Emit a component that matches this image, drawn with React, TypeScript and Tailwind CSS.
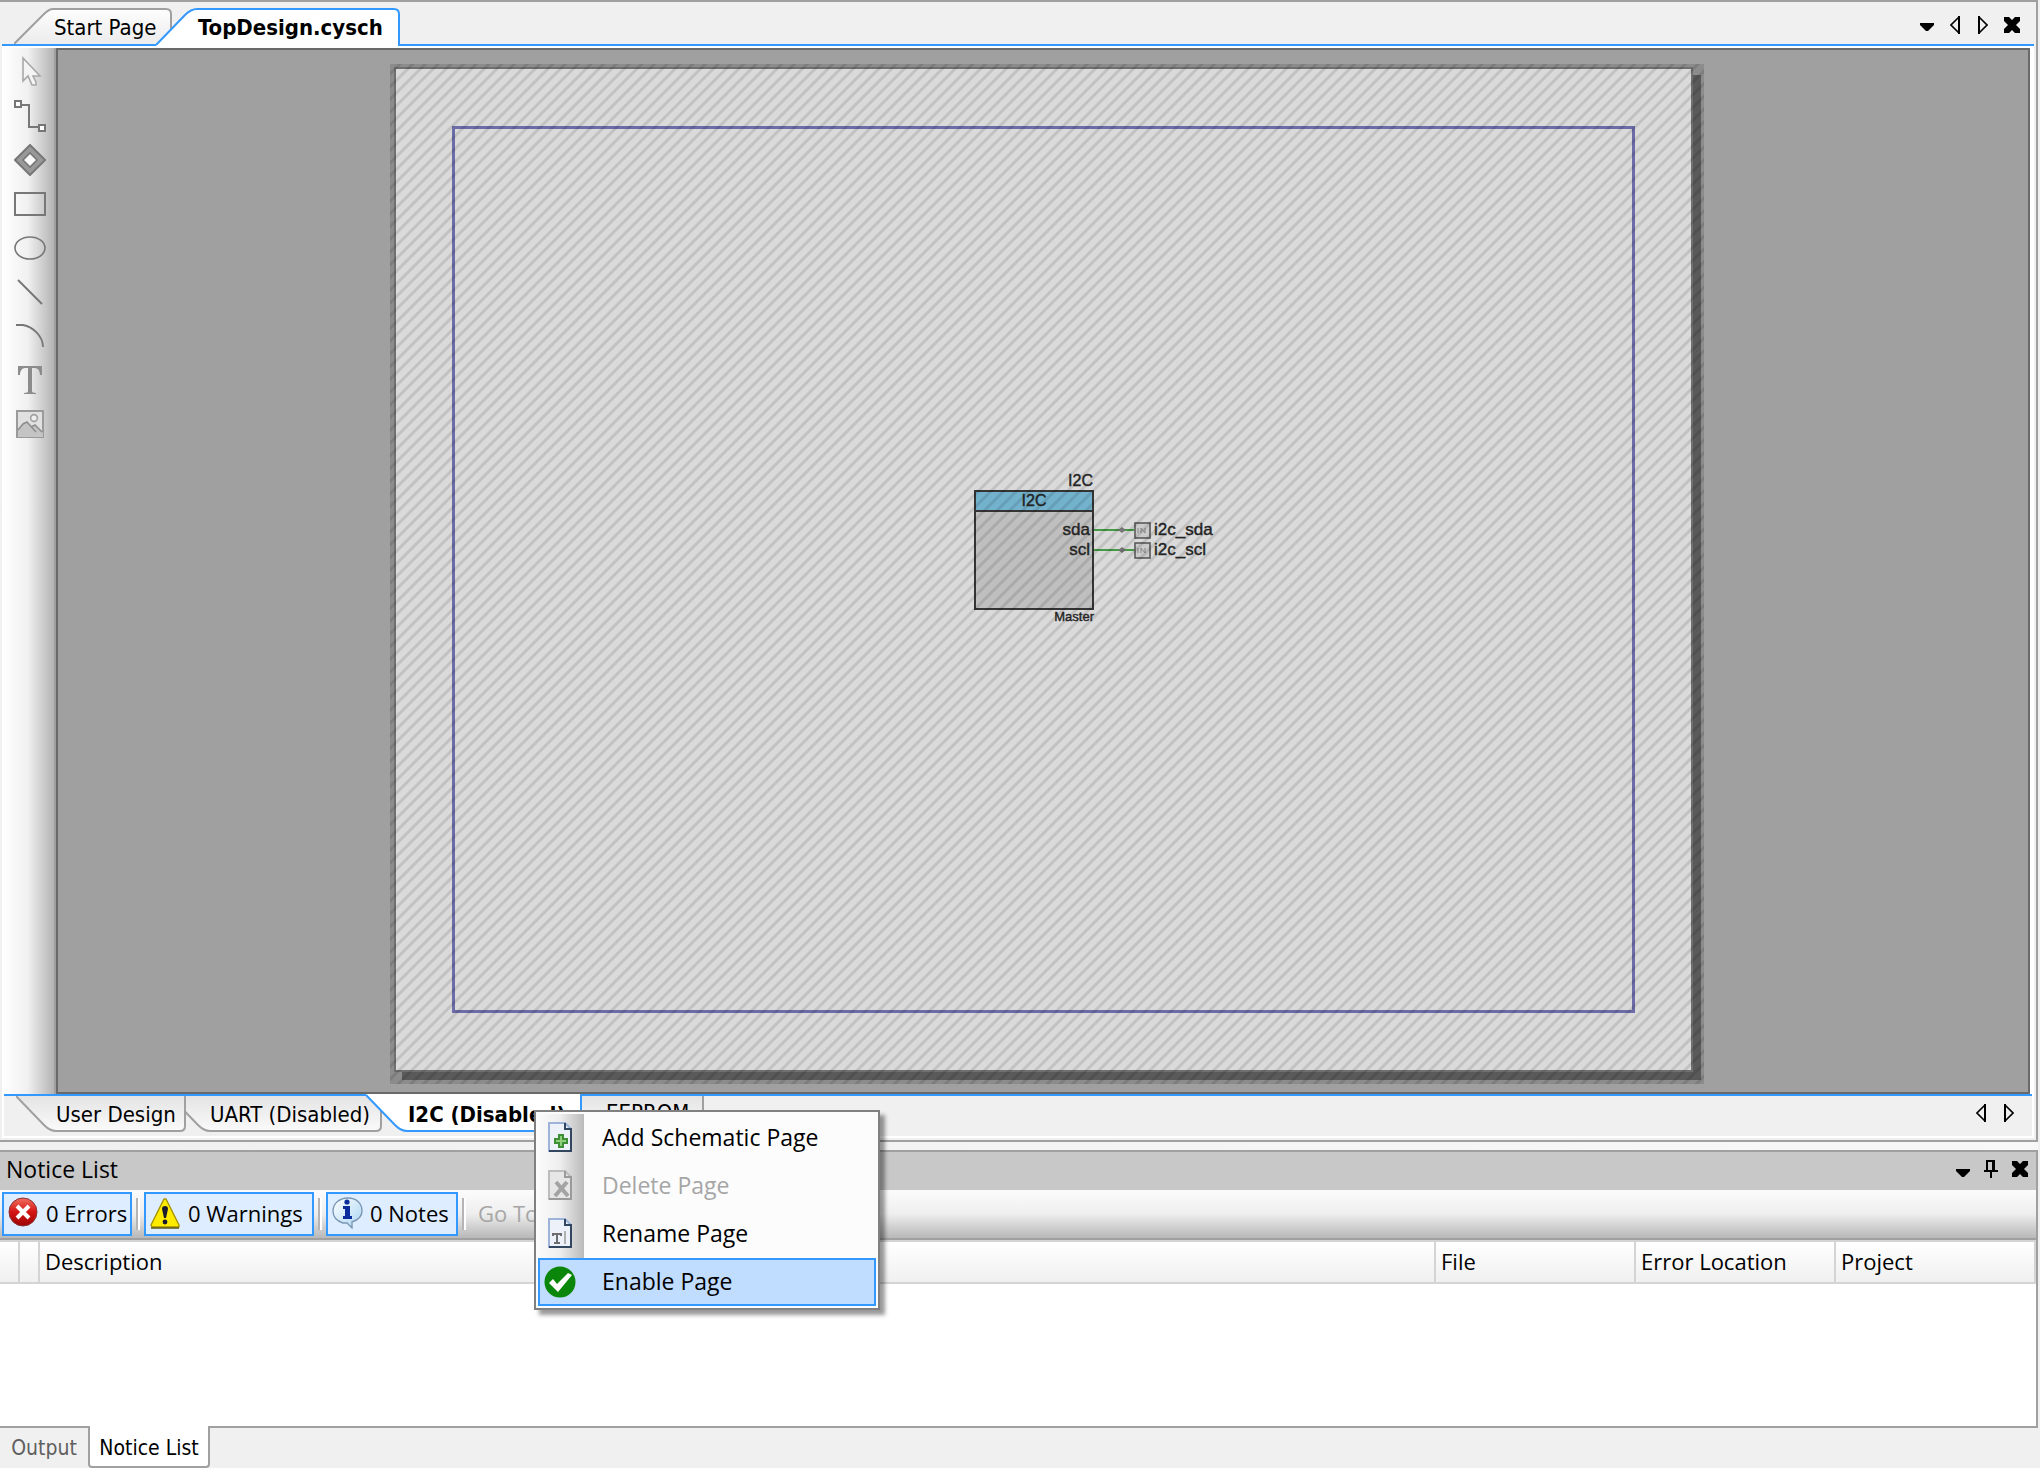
import React, { useState } from 'react';

const tools = ['Select', 'Wire', 'Sheet Connector', 'Rectangle', 'Ellipse', 'Line', 'Arc', 'Text', 'Image'];

const ToolIcon: React.FC<{ name: string }> = ({ name }) => (
  <svg width="32" height="32" viewBox="0 0 32 32" fill="none" stroke="#777" strokeWidth="2">
    {name === 'Select' && (
      <path d="M9 2v23l5-5 4 9h4v-3l-3-6h7z" fill="#f4f4f4" stroke="#a8a8a8" strokeWidth="1.6" />
    )}
    {name === 'Wire' && (
      <>
        <path d="M8 5h7v22h9" />
        <path d="M1 1h6v6H1zM25 25h6v6h-6z" fill="#fff" />
      </>
    )}
    {name === 'Sheet Connector' && (
      <>
        <path d="M16 1l15 15-15 15L1 16z" fill="#999" />
        <path d="M16 9l7 7-7 7-7-7z" fill="#fafafa" strokeWidth="1.6" />
      </>
    )}
    {name === 'Rectangle' && <path d="M1 5h30v22H1z" />}
    {name === 'Ellipse' && <ellipse cx="16" cy="16" rx="15" ry="11" strokeWidth="1.6" />}
    {name === 'Line' && <path d="M4 4l24 24" />}
    {name === 'Arc' && <path d="M2 5h7c10 2 20 11 20 22" strokeWidth="1.8" />}
    {name === 'Text' && (
      <path
        d="M4 2h24v9h-2c0-4-2-7-5-7h-3v23c0 1 1 2 4 2v1H10v-1c3 0 4-1 4-2V4h-3c-3 0-5 3-5 7H4z"
        fill="#8c8c8c"
        stroke="none"
      />
    )}
    {name === 'Image' && (
      <>
        <path d="M3 3h26v26H3z" fill="#e0e0e0" stroke="#9a9a9a" />
        <circle cx="20" cy="10" r="3.4" stroke="#a0a0a0" fill="#eee" strokeWidth="1.6" />
        <path d="M4 22l5-6 4-2 5 5 3-2 8 8v4H4z" fill="#c4c4c4" stroke="none" />
        <path d="M4 22l5-6 4-2 9 10M17 19l4-2 7 7" stroke="#8e8e8e" strokeWidth="1.6" />
      </>
    )}
  </svg>
);

const Caret: React.FC = () => (
  <svg width="14" height="8" viewBox="0 0 14 8">
    <path d="M0 0h14v2L8 8H6L0 2z" />
  </svg>
);

const LeftArrow: React.FC = () => (
  <svg width="10" height="18" viewBox="0 0 10 18" fill="none" stroke="#000" strokeWidth="2">
    <path d="M9 0v18" />
    <path d="M9 1L1 9l8 8" strokeWidth="1.6" />
  </svg>
);

const RightArrow: React.FC = () => (
  <svg width="10" height="18" viewBox="0 0 10 18" fill="none" stroke="#000" strokeWidth="2">
    <path d="M1 0v18" />
    <path d="M1 1l8 8-8 8" strokeWidth="1.6" />
  </svg>
);

const Cross: React.FC = () => (
  <svg width="16" height="16" viewBox="0 0 16 16">
    <path d="M0 0h5l3 3 3-3h5v4l-4 4 4 4v4h-5l-3-3-3 3H0v-4l4-4-4-4z" />
  </svg>
);

const Pin: React.FC = () => (
  <svg width="14" height="18" viewBox="0 0 14 18" fill="none" stroke="#000" strokeWidth="2">
    <path d="M3 11V1h7v10M0 11h14M7 11v7" />
    <path d="M9 1v10" />
  </svg>
);

const ErrorIcon: React.FC = () => (
  <svg width="32" height="32" viewBox="0 0 32 32">
    <defs>
      <linearGradient id="err" x1="0" y1="0" x2="0" y2="1">
        <stop offset="0" stopColor="#f07060" />
        <stop offset="0.5" stopColor="#d51414" />
        <stop offset="1" stopColor="#9c0505" />
      </linearGradient>
    </defs>
    <circle cx="15" cy="15" r="14" fill="url(#err)" stroke="#8d3030" />
    <path d="M9 9l12 12M21 9L9 21" stroke="#fff" strokeWidth="4" />
  </svg>
);

const WarningIcon: React.FC = () => (
  <svg width="32" height="32" viewBox="0 0 32 32">
    <path d="M14 2L1 28l1 2h27l0-2L16 2z" fill="#ffeb00" stroke="#a59300" strokeWidth="1.4" strokeLinejoin="round" />
    <path d="M1 31h28" stroke="#55500a" strokeWidth="1.4" />
    <path d="M15 9c2 0 3 1 3 3l-2 9h-2l-2-9c0-2 1-3 3-3z" fill="#1a1a30" />
    <circle cx="15" cy="25" r="2.4" fill="#1a1a30" />
  </svg>
);

const NoteIcon: React.FC = () => (
  <svg width="32" height="32" viewBox="0 0 32 32">
    <defs>
      <linearGradient id="note" x1="0" y1="0" x2="1" y2="1">
        <stop offset="0" stopColor="#fff" />
        <stop offset="1" stopColor="#a8d4f2" />
      </linearGradient>
    </defs>
    <path
      d="M16 1C8 1 1 6 1 14c0 6 4 10 10 12l4 0 5 5v-6c6-2 10-6 10-11C30 6 24 1 16 1z"
      fill="url(#note)"
      stroke="#7d98b5"
      strokeWidth="1.4"
    />
    <circle cx="15" cy="5" r="2.6" fill="#0a2c9c" />
    <path d="M11 9h7v10h2v3h-9v-3h2v-7h-2z" fill="#0a2c9c" />
  </svg>
);

const PageIcon: React.FC<{ kind: 'add' | 'delete' | 'rename' }> = ({ kind }) => {
  const off = kind === 'delete';
  return (
    <svg width="24" height="30" viewBox="0 0 24 30" fill="none">
      <path d="M1 1h16l6 6v22H1z" fill={off ? '#e6e6e6' : '#edf1f9'} stroke={off ? '#bcbcbc' : '#9db4d8'} strokeWidth="2" />
      <path d="M17 1v6h6v22H1" stroke={off ? '#9a9a9a' : '#33465f'} strokeWidth="2" />
      {kind === 'add' && (
        <path d="M11 13h4v4h4v4h-4v4h-4v-4H7v-4h4z" fill="#8fd07c" stroke="#3e8f35" strokeWidth="2" />
      )}
      {kind === 'delete' && <path d="M8 12l12 14M19 12L7 26" stroke="#a3a3a3" strokeWidth="4" />}
      {kind === 'rename' && (
        <>
          <path d="M4 16h10M9 16v10M6 25h6M5 15v3M13 15v3" stroke="#6e6e6e" strokeWidth="2" />
          <path d="M17 13v13" stroke="#b0b0b0" strokeWidth="2" />
        </>
      )}
    </svg>
  );
};

const EnableIcon: React.FC = () => (
  <svg width="32" height="32" viewBox="0 0 32 32">
    <circle cx="16" cy="16" r="15.5" fill="#0a860a" />
    <path d="M5 17l4-4 4 5L24 7l4 2-14 17z" fill="#fff" />
  </svg>
);

const pins = [
  { name: 'sda', y: 530 },
  { name: 'scl', y: 550 },
];

// component symbol with its two pins
const I2CBlock: React.FC = () => (
  <svg
    width="360"
    height="200"
    viewBox="864 470 360 200"
    className="font-['Liberation_Sans',sans-serif]"
    fill="#2a2a2a"
    stroke="#2a2a2a"
    strokeWidth="0"
  >
    <rect x="975" y="491" width="118" height="118" fill="#dadada" />
    <rect x="975" y="491" width="118" height="20" fill="#82cbea" />
    <path d="M975 491h118v118H975zM975 511h118" fill="none" stroke="#3c3c3c" strokeWidth="2" />
    <g strokeWidth="0.4">
      <text x="1093" y="486" fontSize="16" textAnchor="end">I2C</text>
      <text x="1034" y="506" fontSize="16" textAnchor="middle">I2C</text>
      <text x="1094" y="621" fontSize="13" textAnchor="end">Master</text>
    </g>
    {pins.map((pin) => (
      <g key={pin.name}>
        <path d={`M1094 ${pin.y}h40`} stroke="#4fb04f" strokeWidth="2" />
        <path d={`M1118 ${pin.y}l4-3 4 3-4 3z`} fill="#888" />
        <rect x="1135" y={pin.y - 7} width="15" height="15" fill="#e8e8e8" stroke="#666" strokeWidth="1.6" />
        <path d={`M1138 ${pin.y - 2}v5M1141 ${pin.y + 3}v-5l4 5v-5`} fill="none" stroke="#999" strokeWidth="1" />
        <g fontSize="17" strokeWidth="0.4">
          <text x="1090" y={pin.y + 5} textAnchor="end">{pin.name}</text>
          <text x="1154" y={pin.y + 5}>{`i2c_${pin.name}`}</text>
        </g>
      </g>
    ))}
  </svg>
);

const menuItems = [
  { label: 'Add Schematic Page', icon: <PageIcon kind="add" /> },
  { label: 'Delete Page', icon: <PageIcon kind="delete" />, disabled: true },
  { label: 'Rename Page', icon: <PageIcon kind="rename" /> },
  { label: 'Enable Page', icon: <EnableIcon />, active: true },
];

const PageMenu: React.FC = () => (
  <div
    role="menu"
    className="absolute left-[530px] top-[14px] z-30 w-[346px] border-2 border-[#808080] bg-[#fcfcfc] py-[2px] font-['Open_Sans',sans-serif] text-[23px] shadow-[5px_5px_4px_rgba(0,0,0,0.4)]"
  >
    {menuItems.map((item) =>
      item.active ? (
        <button
          key={item.label}
          role="menuitem"
          className="mx-[2px] flex h-12 w-[338px] items-center border-2 border-[#3399ff] bg-[#c0ddff]"
        >
          <span className="flex w-11 shrink-0 pl-1">{item.icon}</span>
          <span className="pb-[2px] pl-[18px]">{item.label}</span>
        </button>
      ) : (
        <button
          key={item.label}
          role="menuitem"
          disabled={item.disabled}
          className="flex h-12 w-full items-center disabled:text-[#a6a6a6]"
        >
          <span className="flex h-full w-12 shrink-0 items-center justify-center bg-linear-to-r from-[#fcfcfc] via-[#eeeeee] to-[#bababa] pb-[2px]">
            {item.icon}
          </span>
          <span className="pb-[2px] pl-[18px]">{item.label}</span>
        </button>
      )
    )}
  </div>
);

const TabFill: React.FC = () => (
  <svg width="0" height="0" className="absolute">
    <defs>
      <linearGradient id="tab-top" x1="0" y1="0" x2="0" y2="1">
        <stop offset="0" stopColor="#fdfdfd" />
        <stop offset="1" stopColor="#ececec" />
      </linearGradient>
      <linearGradient id="tab-bottom" x1="0" y1="0" x2="0" y2="1">
        <stop offset="0" stopColor="#e4e4e4" />
        <stop offset="1" stopColor="#fafafa" />
      </linearGradient>
    </defs>
  </svg>
);

const DocumentTabs: React.FC = () => (
  <div className="relative z-10 flex h-[42px] items-end justify-between">
    <div className="-mb-[2px] flex pl-3">
      <button className="relative flex h-[38px] w-[158px] items-center pl-10 pt-[2px]">
        <svg className="absolute left-0 top-0" width="158" height="38" viewBox="0 0 158 38">
          <path d="M0 36L30 6q5-5 9-5h113q5 0 5 5v30" fill="url(#tab-top)" stroke="#a0a0a0" strokeWidth="2" />
          <path d="M0 37h158" stroke="#3399ff" strokeWidth="2" />
        </svg>
        <span className="relative">Start Page</span>
      </button>
      <button className="relative -ml-4 flex h-[38px] w-[244px] items-center pl-[42px] pt-[2px] font-bold">
        <svg className="absolute left-0 top-0" width="246" height="38" viewBox="0 0 246 38">
          <path d="M0 37L29 7q6-6 12-6h197q5 0 5 5v31h2v1H0z" fill="#fff" />
          <path d="M0 37L29 7q6-6 12-6h197q5 0 5 5v31h2" fill="none" stroke="#3399ff" strokeWidth="2" />
        </svg>
        <span className="relative">TopDesign.cysch</span>
      </button>
    </div>
    <div className="mb-[10px] mr-[14px] flex items-center">
      <button aria-label="Open documents" className="mr-4 mt-1"><Caret /></button>
      <button aria-label="Scroll left" className="mr-[18px]"><LeftArrow /></button>
      <button aria-label="Scroll right" className="mr-4"><RightArrow /></button>
      <button aria-label="Close document"><Cross /></button>
    </div>
  </div>
);

const SheetTabs: React.FC = () => (
  <div className="relative z-20 flex h-[42px] items-start justify-between border-t-2 border-[#3399ff] bg-[#f0f0f0]">
    <div className="flex pl-3">
      <button className="relative z-10 flex h-9 w-[170px] items-center pl-10 pt-[2px]">
        <svg className="absolute left-0 top-0" width="170" height="36" viewBox="0 0 170 36">
          <path d="M0 0l28 29q6 6 12 6h124q5 0 5-5V0" fill="url(#tab-bottom)" stroke="#a0a0a0" strokeWidth="2" />
        </svg>
        <span className="relative">User Design</span>
      </button>
      <button className="relative -ml-4 flex h-9 w-[212px] items-center pl-10 pt-[2px]">
        <svg className="absolute left-0 top-0" width="212" height="36" viewBox="0 0 212 36">
          <path d="M0 0l28 29q6 6 12 6h166q5 0 5-5V0" fill="url(#tab-bottom)" stroke="#a0a0a0" strokeWidth="2" />
        </svg>
        <span className="relative">UART (Disabled)</span>
      </button>
      <button className="relative z-10 -ml-4 -mt-[2px] flex h-[38px] w-[216px] items-center pl-[42px] pt-1 font-bold">
        <svg className="absolute left-0 top-0" width="216" height="38" viewBox="0 0 216 38">
          <path d="M0 1l29 30q6 6 12 6h169q5 0 5-5V0H0z" fill="#fff" />
          <path d="M0 1l29 30q6 6 12 6h169q5 0 5-5V0" fill="none" stroke="#3399ff" strokeWidth="2" />
        </svg>
        <span className="relative">I2C (Disabled)</span>
      </button>
      <button className="flex h-9 w-[122px] items-center border-b-2 border-r-2 border-[#a0a0a0] bg-linear-to-b from-[#e4e4e4] to-[#fafafa] pl-6">
        EEPROM
      </button>
    </div>
    <div className="mr-[18px] mt-2 flex gap-[18px]">
      <button aria-label="Previous pages"><LeftArrow /></button>
      <button aria-label="Next pages"><RightArrow /></button>
    </div>
    <PageMenu />
  </div>
);

const Canvas: React.FC = () => (
  <div className="flex flex-1 border-2 border-[#696969] bg-[#a0a0a0] pb-2 pl-[332px] pr-[324px] pt-[14px]">
    <div className="relative flex flex-1 pb-3 pl-1 pr-[11px] pt-[3px]">
      <div className="flex flex-1 border-2 border-[#808080] bg-[#f9f9f9] px-14 py-[57px] shadow-[8px_8px_0_#676767]">
        <div className="flex flex-1 items-center justify-center border-[3px] border-[#7c7cc0]">
          <I2CBlock />
        </div>
      </div>
      {/* disabled sheet hatch */}
      <div className="pointer-events-none absolute inset-0 bg-black/12 bg-[repeating-linear-gradient(135deg,rgba(0,0,0,0)_0px,rgba(0,0,0,0)_5px,rgba(0,0,0,0.11)_6px,rgba(0,0,0,0.11)_8px,rgba(0,0,0,0)_9px)]" />
    </div>
  </div>
);

const Separator: React.FC = () => <span className="mx-1 h-8 w-1 border-l-2 border-[#b4b4b4] bg-white" />;

const filters = [
  { label: '0 Errors', icon: <ErrorIcon />, width: 'w-[130px]' },
  { label: '0 Warnings', icon: <WarningIcon />, width: 'w-[170px]' },
  { label: '0 Notes', icon: <NoteIcon />, width: 'w-[132px]' },
];

const columns = [
  { label: '', width: 'w-5' },
  { label: '', width: 'w-5' },
  { label: 'Description', width: '' },
  { label: 'File', width: 'w-[200px]' },
  { label: 'Error Location', width: 'w-[200px]' },
  { label: 'Project', width: 'w-[200px]' },
];

const NoticePanel: React.FC = () => (
  <section className="border-r-2 border-t-2 border-[#a0a0a0] bg-white font-['Open_Sans',sans-serif] text-[23px]">
    <header className="flex h-[38px] items-center justify-between bg-[#c8c8c8] pb-1 pl-[6px] pr-2">
      <h2>Notice List</h2>
      <div className="flex items-center gap-[14px]">
        <button aria-label="Window position" className="mt-2"><Caret /></button>
        <button aria-label="Auto hide"><Pin /></button>
        <button aria-label="Close"><Cross /></button>
      </div>
    </header>
    <div className="flex h-[50px] items-center border-b-2 border-[#a0a0a0] bg-linear-to-b from-[#fcfcfc] via-[#eeeeee] to-[#b8b8b8] pl-[2px] text-[22px]">
      {filters.map((f) => (
        <React.Fragment key={f.label}>
          <button
            aria-pressed="true"
            className={`flex h-11 items-center gap-1.5 whitespace-nowrap border-2 border-[#3399ff] bg-[#deedff] pb-[2px] pl-1 ${f.width}`}
          >
            {f.icon}
            {f.label}
          </button>
          <Separator />
        </React.Fragment>
      ))}
      <button disabled className="pb-[2px] pl-2 text-[#a6a6a6]">Go To Error</button>
    </div>
    <div className="h-[186px]">
      <table className="w-full table-fixed border-separate border-spacing-0 text-[22px]">
        <thead>
          <tr>
            {columns.map((c, i) => (
              <th
                key={i}
                className={`h-11 border-y-2 border-r-2 border-[#d4d4d4] bg-linear-to-b from-white to-[#f0f0f0] p-0 pb-[2px] text-left font-normal leading-none ${c.width}`}
              >
                {c.label && <span className="pl-[5px]">{c.label}</span>}
              </th>
            ))}
          </tr>
        </thead>
      </table>
    </div>
  </section>
);

const App: React.FC = () => {
  const [tab, setTab] = useState('Notice List');

  return (
    <div className="flex h-screen flex-col bg-[#f0f0f0] pr-[2px] font-['DejaVu_Sans_Condensed',sans-serif] text-[22px] leading-7 text-black">
      <TabFill />
      <section className="flex flex-1 flex-col border-b-2 border-r-2 border-t-2 border-[#a0a0a0] px-[2px] pb-[2px]">
        <DocumentTabs />
        <div className="flex flex-1 flex-col border-t-2 border-[#3399ff] bg-white">
          <div className="flex flex-1 pr-1 pt-[2px]">
            <div className="flex w-[54px] flex-col border-r-2 border-[#a0a0a0] bg-linear-to-r from-white via-[#f0f0f0] to-[#b4b4b4] pt-[2px]">
              {tools.map((tool) => (
                <button key={tool} aria-label={tool} className="flex h-11 items-center pl-3">
                  <ToolIcon name={tool} />
                </button>
              ))}
            </div>
            <Canvas />
          </div>
          <div className="border-x-2 border-b-2 border-white">
            <SheetTabs />
          </div>
        </div>
      </section>
      <div className="h-2 bg-linear-to-r from-[#f0f0f0] to-[#f8f8f8]" />
      <NoticePanel />
      <nav className="flex h-[42px] border-t-2 border-[#a0a0a0] text-[21px]">
        {['Output', 'Notice List'].map((name) => (
          <button
            key={name}
            onClick={() => setTab(name)}
            className={
              tab === name
                ? '-mt-[2px] h-[42px] w-[122px] rounded-b-sm border-x-2 border-b-2 border-[#a0a0a0] bg-white pt-1'
                : 'w-[88px] text-[#606060]'
            }
          >
            {name}
          </button>
        ))}
      </nav>
    </div>
  );
};

export default App;
